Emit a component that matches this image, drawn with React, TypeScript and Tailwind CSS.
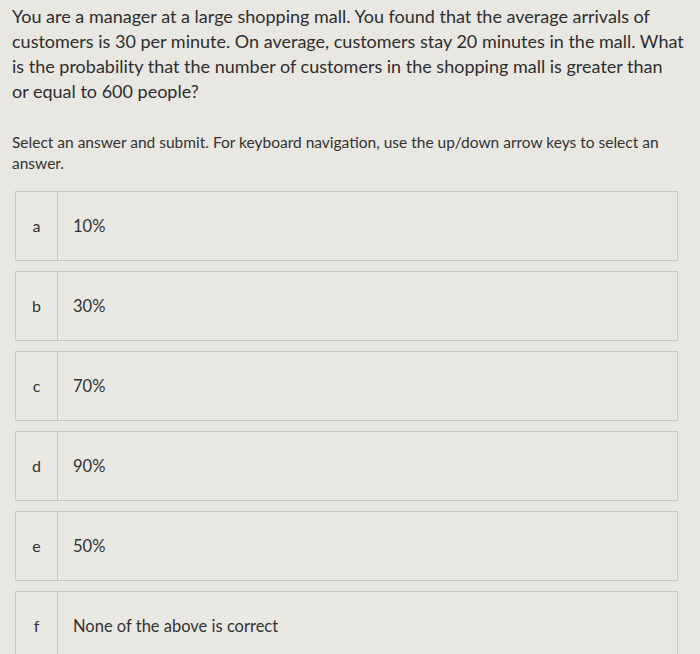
import React from 'react';

const options = [
  { key: 'a', label: '10%' },
  { key: 'b', label: '30%' },
  { key: 'c', label: '70%' },
  { key: 'd', label: '90%' },
  { key: 'e', label: '50%' },
  { key: 'f', label: 'None of the above is correct' },
];

const question = [
  'You are a manager at a large shopping mall. You found that the average arrivals of',
  'customers is 30 per minute. On average, customers stay 20 minutes in the mall. What',
  'is the probability that the number of customers in the shopping mall is greater than',
  'or equal to 600 people?',
];

export default function App() {
  return (
    <div
      className="w-[700px] h-[654px] overflow-hidden bg-[#e9e7e2] text-[#2e2e2e]"
      style={{ fontFamily: 'Lato, "Open Sans", sans-serif' }}
    >
      <div className="pl-[12px] pt-[4px]">
        <p className="text-[18px] leading-[25px] whitespace-nowrap">
          {question.map((line, i) => (
            <span key={i} className="block">{line}</span>
          ))}
        </p>
        <p className="mt-[28px] pr-[10px] text-[15.5px] leading-[21px] text-[#333]">
          Select an answer and submit. For keyboard navigation, use the up/down arrow keys to select an answer.
        </p>
      </div>

      <div className="mt-[17px] pl-[15px] pr-[22px] flex flex-col gap-[10px]">
        {options.map((o) => (
          <div
            key={o.key}
            className="flex h-[70px] border border-[#c9c7c2] bg-[#eae8e3] shrink-0"
          >
            <div className="w-[42px] border-r border-[#c9c7c2] flex items-center justify-center text-[16px] text-[#333]">
              {o.key}
            </div>
            <div className="flex items-center pl-[15px] text-[16.5px] text-[#333]">
              {o.label}
            </div>
          </div>
        ))}
      </div>
    </div>
  );
}
